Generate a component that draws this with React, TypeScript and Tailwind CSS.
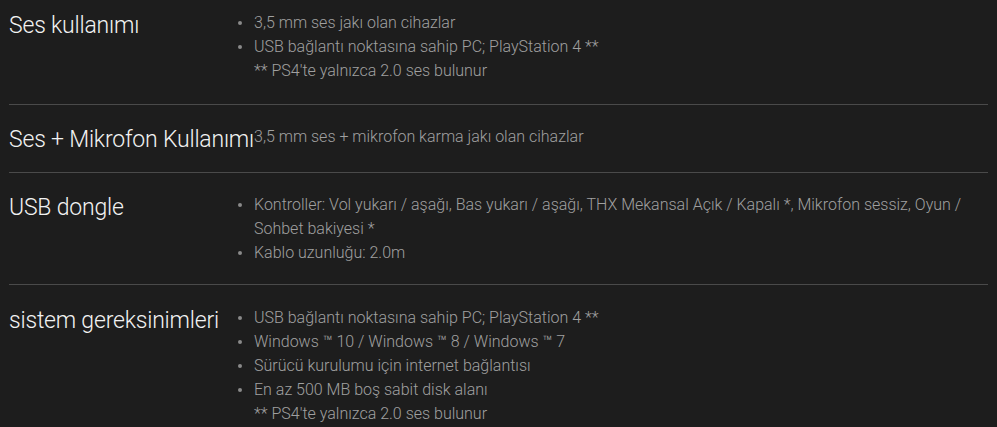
import React from "react";

type Spec = {
  title: string;
  items: string[];
  note?: string;
  bullets: boolean;
  pad: string;
};

const specs: Spec[] = [
  {
    title: "Ses kullanımı",
    items: ["3,5 mm ses jakı olan cihazlar", "USB bağlantı noktasına sahip PC; PlayStation 4 **"],
    note: "** PS4'te yalnızca 2.0 ses bulunur",
    bullets: true,
    pad: "pt-[10px] pb-[21px]",
  },
  {
    title: "Ses + Mikrofon Kullanımı",
    items: ["3,5 mm ses + mikrofon karma jakı olan cihazlar"],
    bullets: false,
    pad: "pt-[19px] pb-[16px]",
  },
  {
    title: "USB dongle",
    items: [
      "Kontroller: Vol yukarı / aşağı, Bas yukarı / aşağı, THX Mekansal Açık / Kapalı *, Mikrofon sessiz, Oyun / Sohbet bakiyesi *",
      "Kablo uzunluğu: 2.0m",
    ],
    bullets: true,
    pad: "pt-[19px] pb-[19px]",
  },
  {
    title: "sistem gereksinimleri",
    items: [
      "USB bağlantı noktasına sahip PC; PlayStation 4 **",
      "Windows ™ 10 / Windows ™ 8 / Windows ™ 7",
      "Sürücü kurulumu için internet bağlantısı",
      "En az 500 MB boş sabit disk alanı",
    ],
    note: "** PS4'te yalnızca 2.0 ses bulunur",
    bullets: true,
    pad: "pt-[20px] pb-[20px]",
  },
];

export default function App() {
  return (
    <div className="min-h-[427px] w-full bg-[#1d1d1d] font-['Roboto',sans-serif] font-light">
      <div className="px-[9px]">
        {specs.map((spec, i) => (
          <div
            key={spec.title}
            className={`flex ${spec.pad} ${i < specs.length - 1 ? "border-b border-[#4a4a4a]" : ""}`}
          >
            {/* başlık kolonu */}
            <div className="w-[245px] shrink-0">
              <h3 className="whitespace-nowrap text-[23px] leading-8 font-light text-[#f2f2f2] tracking-[-0.2px]">
                {spec.title}
              </h3>
            </div>
            <div className="mt-[1px] flex-1 pr-5 text-[16px] leading-6 text-[#a0a0a0]">
              {spec.bullets ? (
                <ul>
                  {spec.items.map((item) => (
                    <li key={item} className="-ml-4 flex">
                      <span className="flex h-6 w-4 shrink-0 items-center">
                        <span className="h-[4px] w-[4px] rounded-full bg-[#8a8a8a]" />
                      </span>
                      <span>{item}</span>
                    </li>
                  ))}
                </ul>
              ) : (
                <p>{spec.items[0]}</p>
              )}
              {spec.note && <p>{spec.note}</p>}
            </div>
          </div>
        ))}
      </div>
    </div>
  );
}
